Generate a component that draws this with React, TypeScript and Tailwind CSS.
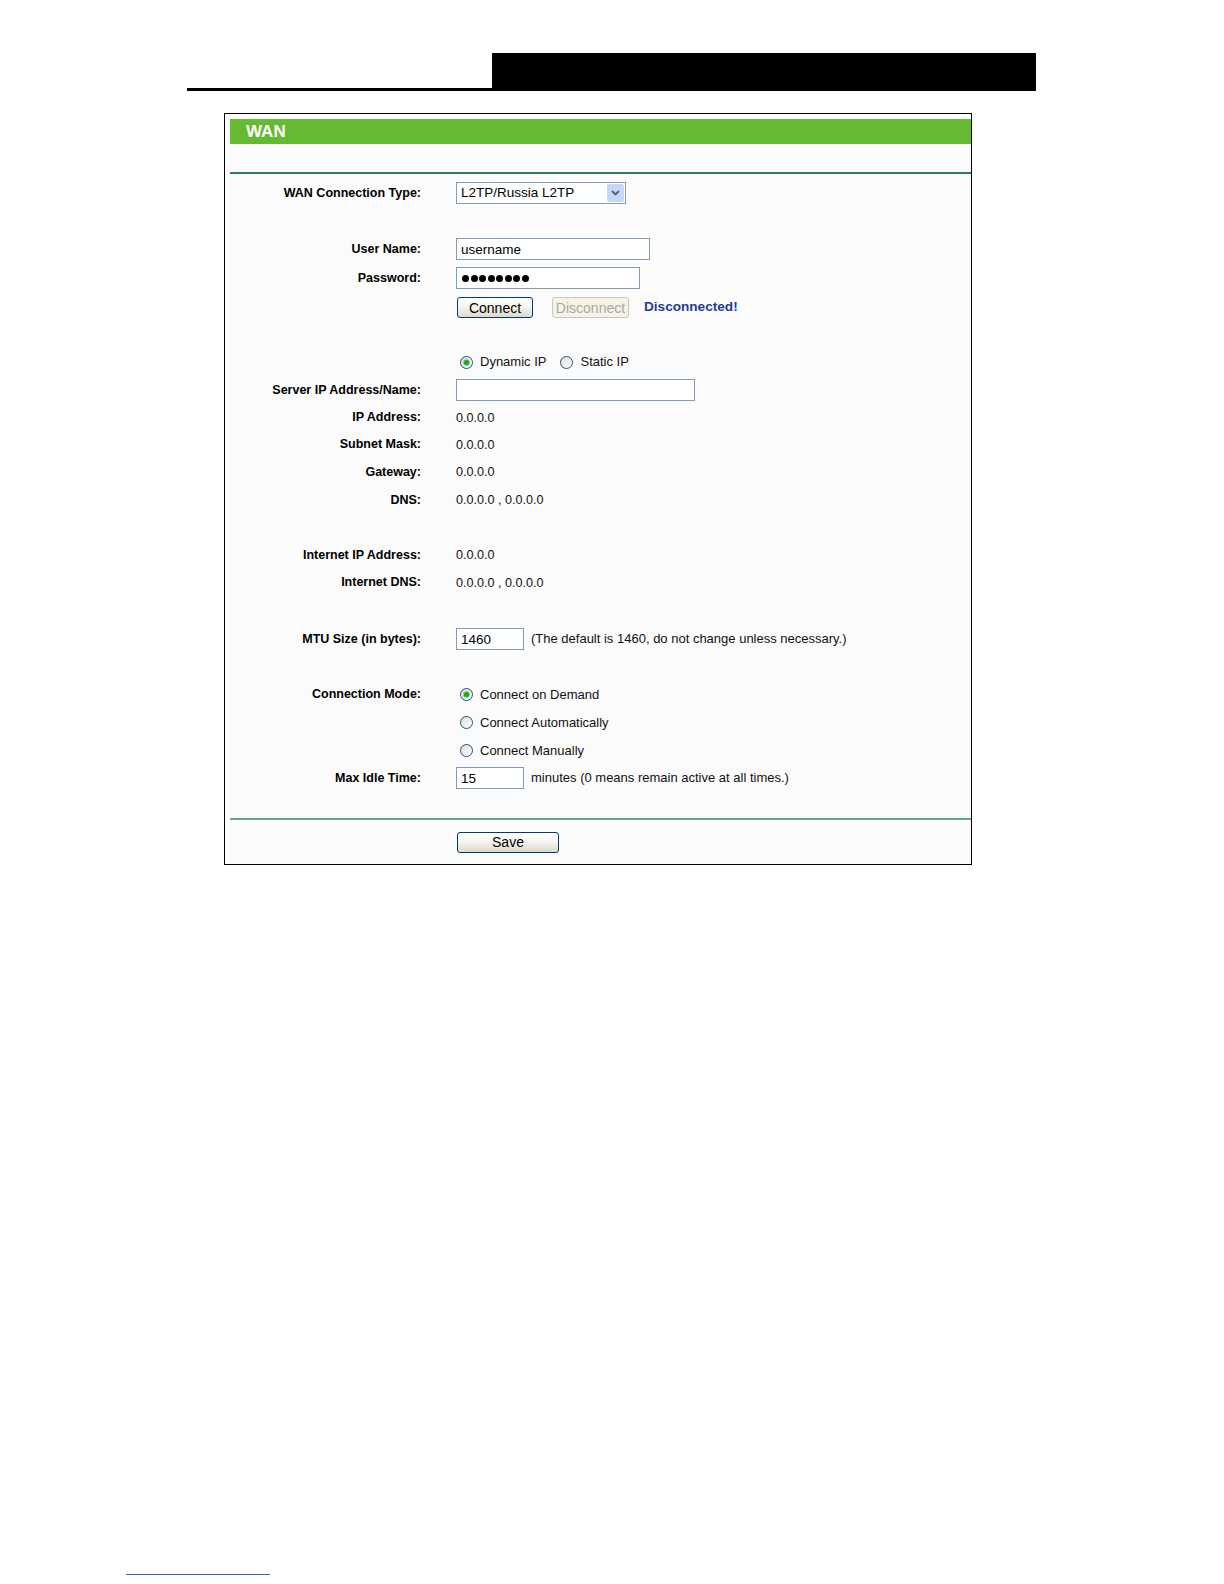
import React from "react";

const font = { fontFamily: '"Liberation Sans", Arial, sans-serif' };

function Label({ children }: { children?: React.ReactNode }) {
  return (
    <div className="w-[191px] shrink-0 text-right text-[12.5px] font-bold text-black">
      {children}
    </div>
  );
}

function Row({
  h,
  label,
  children,
}: {
  h: string;
  label?: string;
  children?: React.ReactNode;
}) {
  return (
    <div className={`flex items-center ${h}`}>
      <Label>{label}</Label>
      <div className="ml-[35px] flex items-center text-[13px] text-[#111]">{children}</div>
    </div>
  );
}

function Value({ children }: { children: React.ReactNode }) {
  return <span className="pt-[1px] text-[12.6px]">{children}</span>;
}

function Radio({ checked, label }: { checked?: boolean; label: string }) {
  return (
    <span className="flex items-center">
      <span className="ml-[4px] flex h-[13px] w-[13px] items-center justify-center rounded-full border border-[#1c5180] bg-gradient-to-br from-[#dcdcd7] to-white">
        {checked && (
          <span className="h-[5px] w-[5px] rounded-full bg-[#21a121] shadow-[0_0_0_1px_#8fd48f]" />
        )}
      </span>
      <span className="ml-[7px] text-[13px] text-[#111]">{label}</span>
    </span>
  );
}

function TextBox({ w, value }: { w: string; value: string }) {
  return (
    <input
      readOnly
      type="text"
      defaultValue={value}
      style={font}
      className={`${w} h-[22px] border border-[#7f9db9] bg-white px-[4px] text-[13.5px] text-black outline-none`}
    />
  );
}

function PasswordBox() {
  return (
    <div className="flex h-[22px] w-[184px] items-center gap-[1.5px] border border-[#7f9db9] bg-white pl-[5px]">
      {[0, 1, 2, 3, 4, 5, 6, 7].map((i) => (
        <span key={i} className="h-[7px] w-[7px] rounded-full bg-black" />
      ))}
    </div>
  );
}

function XpButton({ w, children, disabled }: { w: string; children: React.ReactNode; disabled?: boolean }) {
  return (
    <button
      disabled={disabled}
      style={font}
      className={
        disabled
          ? `${w} h-[21px] rounded-[3px] border border-[#c9c7ba] bg-[#f5f4ea] text-[14px] leading-none text-[#aca899]`
          : `${w} h-[21px] rounded-[3px] border border-[#003c74] bg-gradient-to-b from-white via-[#f4f3ee] to-[#dcd9cb] text-[14px] leading-none text-black`
      }
    >
      {children}
    </button>
  );
}

export default function App() {
  return (
    <div className="min-h-[1584px] bg-white pt-[53px]" style={font}>
      {/* page header strip */}
      <div className="ml-[187px] flex w-[849px] items-end">
        <div className="h-[3px] flex-1 bg-black" />
        <div className="h-[38px] w-[544px] bg-black" />
      </div>

      {/* WAN panel */}
      <div className="ml-[224px] mt-[22px] w-[748px] border border-black bg-white pl-[5px] pt-[5px]">
        <div className="bg-[#fbfbfb]">
          <div className="flex h-[25px] items-center bg-[#66b933] pl-[16px] text-[17px] font-bold text-white">
            WAN
          </div>
          <div className="h-[28px]" />
          <div className="h-[2px] bg-[#2f7d5e]" />

          <Row h="h-[38px]" label="WAN Connection Type:">
            <div className="flex h-[22px] w-[170px] items-center justify-between border border-[#7f9db9] bg-white pl-[4px] pr-[1px] text-[13.5px] text-black">
              <span>L2TP/Russia L2TP</span>
              <span className="flex h-[18px] w-[17px] items-center justify-center rounded-[2px] bg-[#c8d6f7]">
                <svg width="9" height="6" viewBox="0 0 9 6">
                  <path d="M1 1 L4.5 4.5 L8 1" fill="none" stroke="#4d6185" strokeWidth="1.8" />
                </svg>
              </span>
            </div>
          </Row>
          <div className="h-[23px]" />
          <Row h="h-[28px]" label="User Name:">
            <TextBox w="w-[194px]" value="username" />
          </Row>
          <Row h="h-[30px]" label="Password:">
            <PasswordBox />
          </Row>
          <Row h="h-[29px]">
            <span className="ml-[1px]" />
            <XpButton w="w-[76px]">Connect</XpButton>
            <span className="ml-[19px]" />
            <XpButton w="w-[77px]" disabled>
              Disconnect
            </XpButton>
            <span className="ml-[15px] text-[13.6px] font-bold text-[#1d3d95]">Disconnected!</span>
          </Row>
          <div className="h-[26px]" />
          <Row h="h-[28px]">
            <Radio checked label="Dynamic IP" />
            <span className="ml-[10px]" />
            <Radio label="Static IP" />
          </Row>
          <Row h="h-[28px]" label="Server IP Address/Name:">
            <TextBox w="w-[239px]" value="" />
          </Row>
          <Row h="h-[27px]" label="IP Address:"><Value>0.0.0.0</Value></Row>
          <Row h="h-[27px]" label="Subnet Mask:"><Value>0.0.0.0</Value></Row>
          <Row h="h-[28px]" label="Gateway:"><Value>0.0.0.0</Value></Row>
          <Row h="h-[28px]" label="DNS:"><Value>0.0.0.0 , 0.0.0.0</Value></Row>
          <div className="h-[27px]" />
          <Row h="h-[28px]" label="Internet IP Address:"><Value>0.0.0.0</Value></Row>
          <Row h="h-[27px]" label="Internet DNS:"><Value>0.0.0.0 , 0.0.0.0</Value></Row>
          <div className="h-[29px]" />
          <Row h="h-[28px]" label="MTU Size (in bytes):">
            <TextBox w="w-[68px]" value="1460" />
            <span className="ml-[7px]">(The default is 1460, do not change unless necessary.)</span>
          </Row>
          <div className="h-[28px]" />
          <Row h="h-[27px]" label="Connection Mode:">
            <Radio checked label="Connect on Demand" />
          </Row>
          <Row h="h-[29px]">
            <Radio label="Connect Automatically" />
          </Row>
          <Row h="h-[27px]">
            <Radio label="Connect Manually" />
          </Row>
          <Row h="h-[28px]" label="Max Idle Time:">
            <TextBox w="w-[68px]" value="15" />
            <span className="ml-[7px]">minutes (0 means remain active at all times.)</span>
          </Row>
          <div className="h-[26px]" />
          <div className="h-[2px] bg-[#5ea886]" />
          <Row h="h-[44px]">
            <span className="ml-[1px]" />
            <XpButton w="w-[102px]">Save</XpButton>
          </Row>
        </div>
      </div>

      {/* footer link underline */}
      <div className="ml-[126px] mt-[709px] h-px w-[144px] bg-[#3c5cc8]" />
    </div>
  );
}
